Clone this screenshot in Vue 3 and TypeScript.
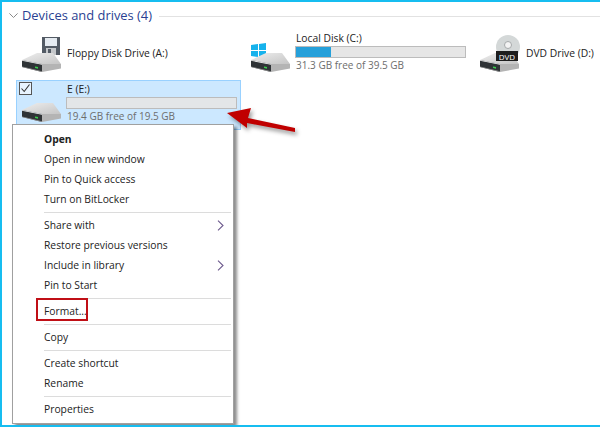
<script setup lang="ts">
type Row = { label: string; bold?: boolean; arrow?: boolean; boxed?: boolean }
const groups: Row[][] = [
  [{ label: 'Open', bold: true }, { label: 'Open in new window' }, { label: 'Pin to Quick access' }, { label: 'Turn on BitLocker' }],
  [{ label: 'Share with', arrow: true }, { label: 'Restore previous versions' }, { label: 'Include in library', arrow: true }, { label: 'Pin to Start' }],
  [{ label: 'Format...', boxed: true }],
  [{ label: 'Copy' }],
  [{ label: 'Create shortcut' }, { label: 'Rename' }],
  [{ label: 'Properties' }]
]
</script>

<template>
  <div class="page">
    <svg class="defs" width="0" height="0">
      <defs>
        <linearGradient id="topface" x1="0" y1="0" x2="1" y2="1">
          <stop offset="0" stop-color="#eeeeee" />
          <stop offset="1" stop-color="#c4c4c4" />
        </linearGradient>
        <g id="disk">
          <path d="M0 7 15 0H31L39 11H20z" fill="url(#topface)" />
          <path d="M20 11H39V15.5L20 19z" fill="#b4b4b4" />
          <path d="M0 7 20 11V19L0 14z" fill="#2f3336" />
          <path d="M0 7 20 11V11.7L0 7.8z" fill="#f4f4f4" />
          <path d="M0 13.4 20 18.3V19L0 14z" fill="#9a9a9a" />
          <path d="M13 13.4 16 14V15.8L13 15z" fill="#3ccb4e" />
        </g>
      </defs>
    </svg>

    <header class="head">
      <svg class="chev" width="9" height="5" viewBox="0 0 9 5"><path d="M.4.4 4.5 4.5 8.6.4" fill="none" stroke="#8a8a8a" /></svg>
      <span class="title">Devices and drives (4)</span>
      <span class="rule"></span>
    </header>

    <div class="drives">
      <div class="drive plain floppy">
        <svg class="icon" width="42" height="36" viewBox="0 0 42 36">
          <rect x="21" y="1" width="18" height="18" fill="#525a64" />
          <rect x="24" y="2" width="12" height="8" fill="#e4eaf0" />
          <rect x="25" y="12" width="10" height="7" fill="#c4c7ca" />
          <rect x="27" y="13" width="3" height="6" fill="#525a64" />
          <use href="#disk" x="1" y="17" />
        </svg>
        <span class="name">Floppy Disk Drive (A:)</span>
      </div>

      <div class="drive local">
        <svg class="icon" width="42" height="36" viewBox="0 0 42 36">
          <path d="M1 9 8 8V14H1zM9 8 16 7V14H9zM1 15H8V21L1 20zM9 15H16V22L9 21z" fill="#16b2ec" />
          <use href="#disk" x="1" y="17" />
        </svg>
        <div class="info">
          <span class="name">Local Disk (C:)</span>
          <div class="bar"><div class="fill"></div></div>
          <span class="free">31.3 GB free of 39.5 GB</span>
        </div>
      </div>

      <div class="drive plain dvd">
        <svg class="icon" width="42" height="36" viewBox="0 0 42 36">
          <use href="#disk" x="1" y="17" />
          <circle cx="29" cy="11" r="12" fill="#d4d8d8" />
          <circle cx="29" cy="9" r="3.5" fill="#f4f4f4" stroke="#a5a9aa" />
          <rect x="17" y="15" width="22" height="10" fill="#1d1d1d" />
          <text x="28" y="23.5" class="dvdtxt" text-anchor="middle">DVD</text>
        </svg>
        <span class="name dvdname">DVD Drive (D:)</span>
      </div>
    </div>

    <div class="drive selected">
      <span class="check">
        <svg width="11" height="11" viewBox="0 0 11 11"><path d="M1.5 5.5 4.2 8.5 9.5 1.5" fill="none" stroke="#333" stroke-width="1.1" /></svg>
      </span>
      <svg class="icon" width="42" height="36" viewBox="0 0 42 36">
        <use href="#disk" x="1" y="17" />
      </svg>
      <div class="info">
        <span class="name">E (E:)</span>
        <div class="bar wide"></div>
        <span class="free">19.4 GB free of 19.5 GB</span>
      </div>
    </div>

    <svg class="arrow" width="72" height="28" viewBox="0 0 72 28">
      <path d="M1 6 25 1 22 11 69 21V25L21 16 21 21z" fill="#c00000" />
    </svg>

    <ul class="menu">
      <li v-for="(group, g) in groups" :key="g" class="group">
        <div v-for="row in group" :key="row.label" class="row" :class="{ bold: row.bold }">
          <span :class="{ boxed: row.boxed }">{{ row.label }}</span>
          <svg v-if="row.arrow" class="sub" width="7" height="11" viewBox="0 0 7 11"><path d="M1 .6 6 5.5 1 10.4" fill="none" stroke="#6d5a8d" stroke-width="1.1" /></svg>
        </div>
      </li>
    </ul>
  </div>
</template>

<style>
html, body { margin: 0; background: #fff; }
</style>

<style scoped>
.page {
  position: relative;
  box-sizing: border-box;
  width: 600px;
  height: 427px;
  overflow: hidden;
  background: #fff;
  border: solid #16bdf0;
  border-width: 2px 0 2px 2px;
  font-family: "Open Sans", "Noto Sans", sans-serif;
  font-size: 10.3px;
  color: #222;
}
.defs { position: absolute; }
.head {
  display: flex;
  align-items: center;
  height: 26px;
  padding-left: 7px;
}
.chev { margin-right: 4px; }
.title { font-size: 12.9px; color: #2a3f92; }
.rule { flex: 1; height: 1px; margin: 2px 0 0 7px; background: #e2e2e2; }
.drives {
  display: flex;
  height: 41px;
  margin-top: 3px;
  padding-left: 19px;
}
.drive { display: flex; align-items: flex-start; }
.floppy, .local { width: 229px; }
.dvd { flex: 1; }
.icon { flex: none; margin-right: 4px; overflow: visible; }
.drives .icon { margin-top: 5px; }
.plain .name { margin-top: 15px; }
.dvdname { margin-left: 1px; }
.info { display: flex; flex-direction: column; }
.name { line-height: 14px; }
.free { color: #6d6d6d; font-size: 10px; line-height: 14px; }
.bar {
  box-sizing: border-box;
  width: 171px;
  height: 12px;
  margin: 1px 0 0 -1px;
  background: #e6e6e6;
  border: 1px solid #bcbcbc;
}
.fill { width: 35px; height: 100%; background: #26a0da; }
.selected {
  position: relative;
  box-sizing: border-box;
  width: 225px;
  height: 50px;
  margin: 8px 0 0 14px;
  padding-left: 4px;
  background: #cce8ff;
  border: 1px solid #99d1ff;
}
.selected .icon { margin-top: 5px; }
.selected .info { margin-top: 1px; }
.bar.wide { background: #e3e6e8; }
.check {
  position: absolute;
  left: 2px;
  top: 1px;
  box-sizing: border-box;
  display: flex;
  align-items: center;
  justify-content: center;
  width: 13px;
  height: 13px;
  background: #e8f4ff;
  border: 1px solid #555;
}
.arrow {
  position: absolute;
  left: 224px;
  top: 105px;
  overflow: visible;
  filter: drop-shadow(2px 3px 2px rgba(0, 0, 0, .4));
}
.dvdtxt { font-size: 8px; fill: #fff; }
.menu {
  position: absolute;
  left: 10px;
  top: 122px;
  box-sizing: border-box;
  width: 222px;
  height: 300px;
  margin: 0;
  padding: 2px 2px 0 31px;
  list-style: none;
  background: #fff;
  border: 1px solid #a0a0a0;
  box-shadow: 3px 3px 3px rgba(0, 0, 0, .45);
}
.group { padding: 2px 0 3px; border-bottom: 1px solid #dcdcdc; }
.group:last-child { border-bottom: 0; }
.row {
  display: flex;
  align-items: center;
  justify-content: space-between;
  height: 20px;
  padding-right: 7px;
}
.row.bold { font-weight: 700; }
.boxed {
  position: relative;
  display: block;
  line-height: 20px;
  white-space: nowrap;
}
.boxed::after {
  content: "";
  position: absolute;
  left: -8px;
  top: -3px;
  box-sizing: border-box;
  width: 52px;
  height: 23px;
  border: 2px solid #c00f16;
}
.sub { flex: none; }
</style>
